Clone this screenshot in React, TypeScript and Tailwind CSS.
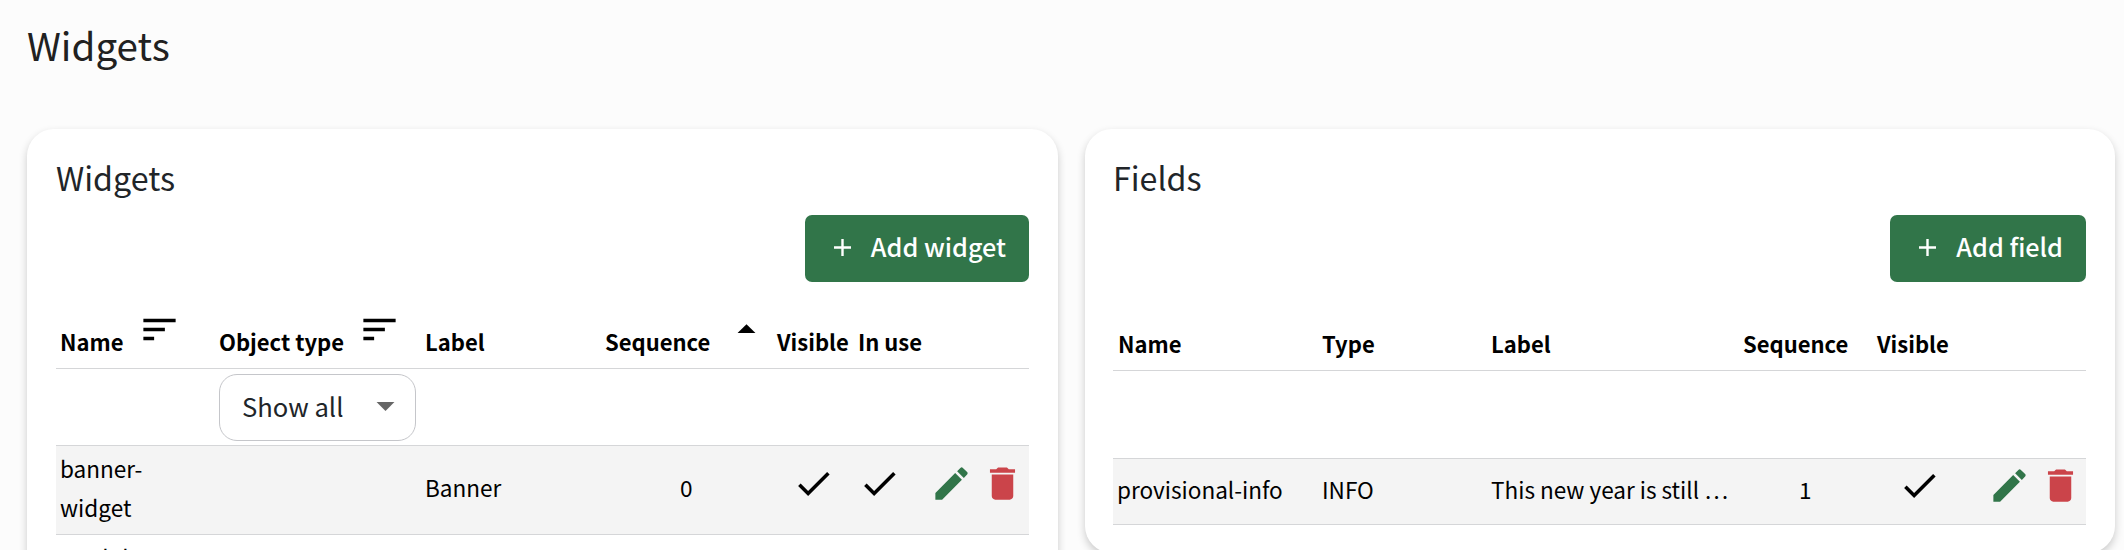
import { ReactNode } from 'react';
import clsx from 'clsx';

const icons = {
  sort: 'M3 18h6v-2H3v2zM3 6v2h18V6H3zm0 7h12v-2H3v2z',
  up: 'M7 14l5-5 5 5z',
  down: 'M7 10l5 5 5-5z',
  check: 'M9 16.17 4.83 12l-1.42 1.41L9 19 21 7l-1.41-1.41z',
  edit: 'M3 17.25V21h3.75L17.81 9.94l-3.75-3.75L3 17.25zM20.71 7.04c.39-.39.39-1.02 0-1.41l-2.34-2.34a.9959.9959 0 0 0-1.41 0l-1.83 1.83 3.75 3.75 1.83-1.83z',
  trash: 'M6 19c0 1.1.9 2 2 2h8c1.1 0 2-.9 2-2V7H6v12zM19 4h-3.5l-1-1h-5l-1 1H5v2h14V4z',
};

interface IconProps {
  name: keyof typeof icons;
  className?: string;
}

function Icon({ name, className }: IconProps) {
  return (
    <svg viewBox="0 0 24 24" fill="currentColor" className={clsx('size-[43px] shrink-0', className)}>
      <path d={icons[name]} />
    </svg>
  );
}

interface PanelProps {
  title: string;
  action: string;
  className?: string;
  children: ReactNode;
}

function Panel({ title, action, className, children }: PanelProps) {
  return (
    <section
      className={clsx('rounded-[27px] bg-white pr-[29px] shadow-[0_4px_8px_rgba(0,0,0,0.2)]', className)}
    >
      <h2 className="h-[86px] pt-[24px] text-[32.2px] leading-[48px] text-[#212529]">{title}</h2>
      <div className="flex justify-end">
        <button className="flex h-[67px] items-center rounded-[7px] bg-[#317549] pr-[23px] pb-[3px] pl-[29px] text-[25.2px] font-medium text-white">
          <svg viewBox="0 0 17 17" className="mt-px mr-5 size-[17px]" stroke="currentColor" strokeWidth="2.4">
            <path d="M8.5 0v17M0 8.5h17" />
          </svg>
          {action}
        </button>
      </div>
      {children}
    </section>
  );
}

function RowActions({ className }: { className?: string }) {
  return (
    <div className={clsx('-mt-[13px] flex gap-2', className)}>
      <button className="text-[#317549]">
        <Icon name="edit" />
      </button>
      <button className="text-[#cb444a]">
        <Icon name="trash" />
      </button>
    </div>
  );
}

function WidgetsTable() {
  const columns = 'grid grid-cols-[158px_206px_180px_171px_82px_70px_106px] border-b border-[#d5d6d8]';

  return (
    <div className="text-[22.55px] leading-[39px] text-black">
      {/* Header */}
      <div className={clsx(columns, 'h-[87px] pt-[40px] text-[22px] font-bold whitespace-nowrap')}>
        <div className="flex pl-[4px]">
          Name
          <Icon name="sort" className="-mt-[14px] ml-[15px]" />
        </div>
        <div className="flex pl-[5px]">
          Object type
          <Icon name="sort" className="-mt-[14px] ml-[14px]" />
        </div>
        <div className="pl-[5px]">Label</div>
        <div className="flex pl-[5px]">
          Sequence
          <Icon name="up" className="-mt-[14px] ml-[15px]" />
        </div>
        <div className="pl-[6px]">Visible</div>
        <div className="pl-[5px]">In use</div>
      </div>

      {/* Filters */}
      <div className={clsx(columns, 'h-[77px] pt-[5px]')}>
        <div className="col-start-2 ml-[5px] flex h-[67px] w-[197px] items-center rounded-[18px] border border-[#c5c6ca] pr-[8px] pb-[5px] pl-[22px] text-[25.6px] text-[#212529]">
          <span className="flex-1">Show all</span>
          <Icon name="down" className="text-[#666]" />
        </div>
      </div>

      <div className={clsx(columns, 'h-[89px] items-center bg-[#f4f4f4]')}>
        <div className="-mt-[5px] pl-[4px]">banner-<br />widget</div>
        <div />
        <div className="-mt-[5px] pl-[5px]">Banner</div>
        <div className="-mt-[5px] pl-[80px]">0</div>
        <Icon name="check" className="-mt-[13px] ml-[21px]" />
        <Icon name="check" className="-mt-[13px] ml-[5px]" />
        <RowActions className="ml-[7px]" />
      </div>

      <div className={clsx(columns, 'h-[89px] items-center')}>
        <div className="-mt-[5px] pl-[4px]">module-<br />widget</div>
      </div>
    </div>
  );
}

function FieldsTable() {
  const columns = 'grid grid-cols-[204px_168px_253px_133px_112px_103px] border-b border-[#d5d6d8]';

  return (
    <div className="text-[22.55px] leading-[39px] text-black">
      <div className={clsx(columns, 'h-[89px] pt-[42px] text-[22px] font-bold')}>
        <div className="pl-[5px]">Name</div>
        <div className="pl-[5px]">Type</div>
        <div className="pl-[6px]">Label</div>
        <div className="pl-[5px]">Sequence</div>
        <div className="pl-[6px]">Visible</div>
      </div>

      <div className={clsx(columns, 'h-[88px]')} />

      <div className={clsx(columns, 'h-[66px] items-center bg-[#f4f4f4]')}>
        <div className="-mt-[5px] pl-[4px]">provisional-info</div>
        <div className="-mt-[5px] pl-[5px]">INFO</div>
        <div className="-mt-[5px] pl-[6px]">This new year is still …</div>
        <div className="-mt-[5px] pl-[61px]">1</div>
        <Icon name="check" className="-mt-3 ml-[27px]" />
        <RowActions className="ml-[5px]" />
      </div>
    </div>
  );
}

export default function App() {
  return (
    <main className="h-[550px] overflow-hidden bg-[#fcfcfc] px-[27px] font-['Noto_Sans_CJK_SC',sans-serif]">
      <h1 className="h-[129px] pt-[16px] text-[38.6px] leading-[56px] text-[#212121]">Widgets</h1>
      <div className="flex w-max items-start gap-[27px]">
        <Panel title="Widgets" action="Add widget" className="h-[600px] w-[1031px] pl-[29px]">
          <WidgetsTable />
        </Panel>
        <Panel title="Fields" action="Add field" className="h-[424px] w-[1030px] pl-[28px]">
          <FieldsTable />
        </Panel>
      </div>
    </main>
  );
}
